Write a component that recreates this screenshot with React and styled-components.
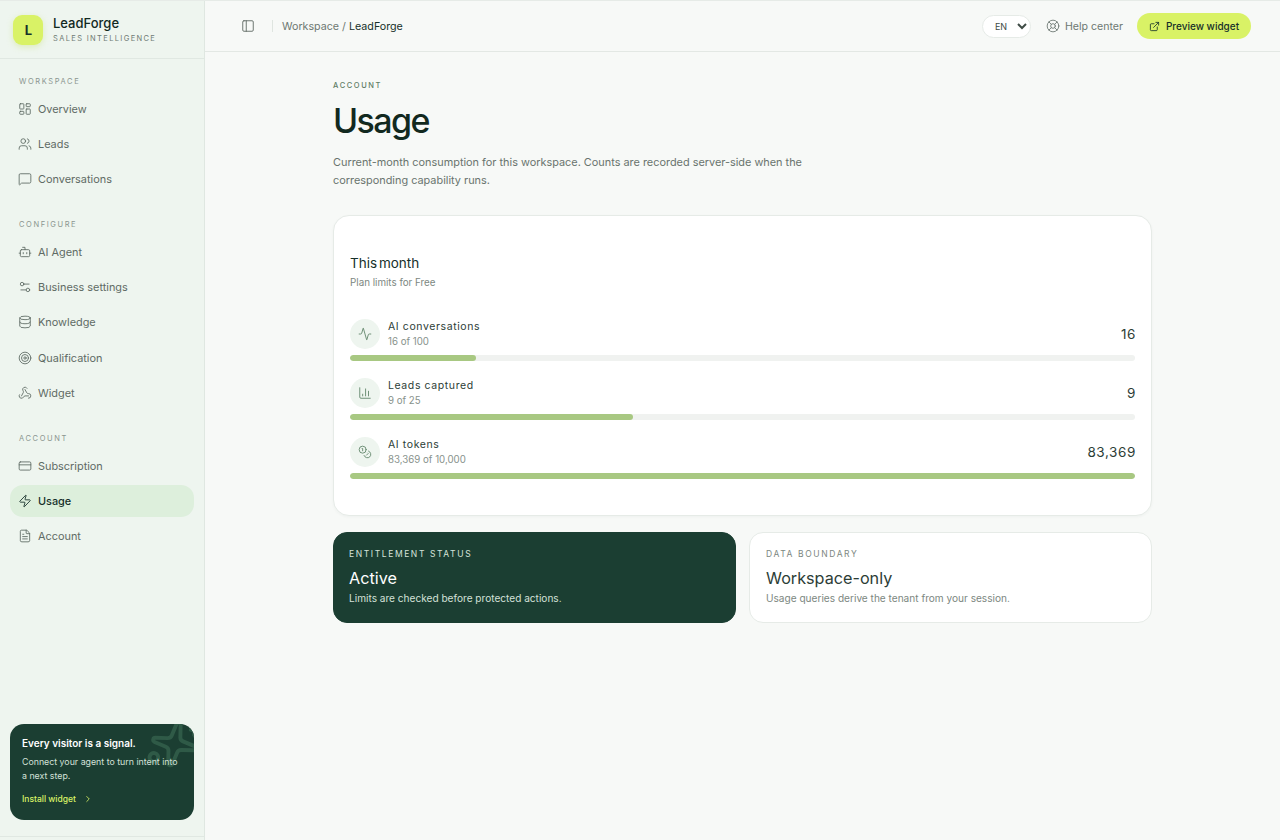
import styled, { createGlobalStyle } from "styled-components";
import {
  Activity,
  Bot,
  ChartColumn,
  ChevronRight,
  Coins,
  CreditCard,
  Database,
  ExternalLink,
  FileText,
  LayoutDashboard,
  LifeBuoy,
  MessageSquare,
  PanelLeft,
  Settings2,
  Sparkles,
  Target,
  Users,
  Webhook,
  Zap,
} from "lucide-react";

const navGroups = [
  {
    label: "Workspace",
    items: [
      { name: "Overview", icon: LayoutDashboard },
      { name: "Leads", icon: Users },
      { name: "Conversations", icon: MessageSquare },
    ],
  },
  {
    label: "Configure",
    items: [
      { name: "AI Agent", icon: Bot },
      { name: "Business settings", icon: Settings2 },
      { name: "Knowledge", icon: Database },
      { name: "Qualification", icon: Target },
      { name: "Widget", icon: Webhook },
    ],
  },
  {
    label: "Account",
    items: [
      { name: "Subscription", icon: CreditCard },
      { name: "Usage", icon: Zap, active: true },
      { name: "Account", icon: FileText },
    ],
  },
];

const meters = [
  { name: "AI conversations", detail: "16 of 100", value: "16", pct: 16, icon: Activity },
  { name: "Leads captured", detail: "9 of 25", value: "9", pct: 36, icon: ChartColumn },
  { name: "AI tokens", detail: "83,369 of 10,000", value: "83,369", pct: 100, icon: Coins },
];

const App = () => {
  return (
    <Shell>
      <GlobalStyle />
      <Sidebar>
        <Brand>
          <BrandMark>L</BrandMark>
          <div>
            <BrandName>LeadForge</BrandName>
            <BrandTag>Sales Intelligence</BrandTag>
          </div>
        </Brand>
        <Nav>
          {navGroups.map((group) => (
            <NavGroup key={group.label}>
              <NavLabel>{group.label}</NavLabel>
              {group.items.map((item) => (
                <NavItem key={item.name} $active={item.active}>
                  <item.icon size={14} strokeWidth={1.5} />
                  {item.name}
                </NavItem>
              ))}
            </NavGroup>
          ))}
        </Nav>
        <Promo>
          <PromoStar>
            <Sparkles size={52} strokeWidth={1.8} />
          </PromoStar>
          <PromoTitle>Every visitor is a signal.</PromoTitle>
          <PromoText>Connect your agent to turn intent into a next step.</PromoText>
          <PromoLink>
            Install widget
            <ChevronRight size={10} strokeWidth={2} />
          </PromoLink>
        </Promo>
        <SidebarFoot />
      </Sidebar>
      <Main>
        <Topbar>
          <TopLeft>
            <PanelLeft size={14} strokeWidth={1.5} color="#5b6660" />
            <Divider />
            <Crumbs>
              Workspace / <strong>LeadForge</strong>
            </Crumbs>
          </TopLeft>
          <TopRight>
            <LangSelect defaultValue="en">
              <option value="en">EN</option>
            </LangSelect>
            <HelpLink>
              <LifeBuoy size={14} strokeWidth={1.5} />
              Help center
            </HelpLink>
            <PreviewBtn>
              <ExternalLink size={11} strokeWidth={1.8} />
              Preview widget
            </PreviewBtn>
          </TopRight>
        </Topbar>
        <Content>
          <Eyebrow>Account</Eyebrow>
          <Title>Usage</Title>
          <Intro>
            Current-month consumption for this workspace. Counts are recorded server-side when the
            corresponding capability runs.
          </Intro>
          <UsageCard>
            <CardTitle>This month</CardTitle>
            <CardSub>Plan limits for Free</CardSub>
            <Meters>
              {meters.map((m) => (
                <Meter key={m.name}>
                  <MeterHead>
                    <MeterIcon>
                      <m.icon size={14} strokeWidth={1.5} />
                    </MeterIcon>
                    <MeterInfo>
                      <MeterName>{m.name}</MeterName>
                      <MeterDetail>{m.detail}</MeterDetail>
                    </MeterInfo>
                    <MeterValue>{m.value}</MeterValue>
                  </MeterHead>
                  <Track>
                    <Fill style={{ width: `${m.pct}%` }} />
                  </Track>
                </Meter>
              ))}
            </Meters>
          </UsageCard>
          <StatusGrid>
            <StatusCard $dark>
              <StatusLabel $dark>Entitlement status</StatusLabel>
              <StatusValue $dark>Active</StatusValue>
              <StatusText $dark>Limits are checked before protected actions.</StatusText>
            </StatusCard>
            <StatusCard>
              <StatusLabel>Data boundary</StatusLabel>
              <StatusValue>Workspace-only</StatusValue>
              <StatusText>Usage queries derive the tenant from your session.</StatusText>
            </StatusCard>
          </StatusGrid>
        </Content>
      </Main>
    </Shell>
  );
};

const GlobalStyle = createGlobalStyle`
  * {
    box-sizing: border-box;
  }
  body {
    margin: 0;
    background: #f7f9f7;
    font-family: Inter, "Noto Sans", sans-serif;
    color: #16302a;
  }
`;

const Shell = styled.div`
  display: flex;
  height: 840px;
  border-top: 1px solid #e6ebe7;
  overflow: hidden;
`;

const Sidebar = styled.aside`
  display: flex;
  flex-direction: column;
  width: 205px;
  flex-shrink: 0;
  background: #eef5ef;
  border-right: 1px solid #dfe7e1;
`;

const Brand = styled.div`
  display: flex;
  align-items: center;
  gap: 10px;
  height: 58px;
  padding: 0 13px;
  border-bottom: 1px solid #e0e8e2;
`;

const BrandMark = styled.div`
  display: flex;
  align-items: center;
  justify-content: center;
  width: 30px;
  height: 30px;
  padding-left: 1px;
  border-radius: 9px;
  background: #d9f266;
  color: #16302a;
  font-size: 13px;
  font-weight: 700;
  box-shadow: 0 2px 6px rgba(190, 220, 90, 0.35);
`;

const BrandName = styled.div`
  font-size: 13px;
  font-weight: 500;
  line-height: 16px;
  color: #12291f;
`;

const BrandTag = styled.div`
  margin-top: 3px;
  font-size: 7.5px;
  line-height: 10px;
  letter-spacing: 1.35px;
  text-transform: uppercase;
  color: #6f7b74;
`;

const Nav = styled.nav`
  flex: 1;
  padding: 16px 10px 0;
`;

const NavGroup = styled.div`
  margin-bottom: 22.7px;
`;

const NavLabel = styled.div`
  height: 13px;
  padding-left: 9px;
  margin-bottom: 5px;
  font-size: 7.5px;
  line-height: 13px;
  letter-spacing: 1.6px;
  text-transform: uppercase;
  color: #8b958f;
`;

const NavItem = styled.a`
  display: flex;
  align-items: center;
  gap: 6px;
  height: 32px;
  margin-bottom: 3.2px;
  padding-left: 8px;
  border-radius: 13px;
  font-size: 10.9px;
  color: ${(props) => (props.$active ? "#16302a" : "#5f6b65")};
  font-weight: ${(props) => (props.$active ? 500 : 400)};
  background: ${(props) => (props.$active ? "#ddefdc" : "none")};
`;

const Promo = styled.div`
  position: relative;
  height: 96px;
  margin: 0 10px 16px;
  padding: 12px 12px;
  border-radius: 14px;
  background: #1b3e32;
  overflow: hidden;
`;

const PromoStar = styled.div`
  position: absolute;
  top: -6px;
  right: -6px;
  color: #2f5a47;
  transform: rotate(12deg);
`;

const PromoTitle = styled.div`
  position: relative;
  font-size: 10px;
  font-weight: 600;
  line-height: 14px;
  color: #ffffff;
`;

const PromoText = styled.div`
  position: relative;
  margin-top: 5px;
  font-size: 8.8px;
  line-height: 14px;
  color: #d3e0d8;
`;

const PromoLink = styled.div`
  position: relative;
  display: flex;
  align-items: center;
  gap: 7px;
  margin-top: 11px;
  font-size: 8.5px;
  font-weight: 500;
  color: #d9f266;
`;

const SidebarFoot = styled.div`
  height: 4px;
  border-top: 1px solid #e0e8e2;
`;

const Main = styled.main`
  flex: 1;
  min-width: 0;
`;

const Topbar = styled.header`
  display: flex;
  align-items: center;
  justify-content: space-between;
  height: 51px;
  padding: 0 29px 0 36px;
  border-bottom: 1px solid #e3e8e4;
`;

const TopLeft = styled.div`
  display: flex;
  align-items: center;
`;

const Divider = styled.span`
  width: 1px;
  height: 12px;
  margin: 0 9px 0 17px;
  background: #dfe5e0;
`;

const Crumbs = styled.div`
  font-size: 10.7px;
  color: #6d7872;
  strong {
    font-weight: 400;
    color: #16302a;
  }
`;

const TopRight = styled.div`
  display: flex;
  align-items: center;
`;

const LangSelect = styled.select`
  width: 49px;
  height: 23px;
  padding: 0 0 0 8px;
  margin-right: 15px;
  border: 1px solid #e6ebe7;
  border-radius: 12px;
  background: #ffffff;
  font-family: inherit;
  font-size: 9px;
  color: #3f4c46;
`;

const HelpLink = styled.a`
  display: flex;
  align-items: center;
  gap: 5px;
  margin-right: 14px;
  font-size: 10.6px;
  color: #6d7872;
`;

const PreviewBtn = styled.button`
  display: flex;
  align-items: center;
  justify-content: center;
  gap: 6px;
  width: 114px;
  height: 26px;
  border: none;
  border-radius: 13px;
  background: #d9f266;
  font-family: inherit;
  font-size: 10px;
  font-weight: 500;
  color: #16302a;
`;

const Content = styled.div`
  width: 819px;
  margin-left: 128px;
  padding-top: 28px;
`;

const Eyebrow = styled.div`
  font-size: 7.5px;
  line-height: 11px;
  font-weight: 500;
  letter-spacing: 1.6px;
  text-transform: uppercase;
  color: #5f7d66;
`;

const Title = styled.h1`
  margin: 8px 0 0;
  font-size: 34px;
  line-height: 44px;
  font-weight: 500;
  letter-spacing: -1.6px;
  color: #12291f;
`;

const Intro = styled.p`
  width: 490px;
  margin: 10px 0 0;
  font-size: 10.9px;
  line-height: 18px;
  color: #69746e;
`;

const UsageCard = styled.section`
  height: 301px;
  margin-top: 26px;
  padding: 38px 16px 0;
  border: 1px solid #e6ebe7;
  border-radius: 16px;
  background: #ffffff;
  box-shadow: 0 1px 3px rgba(20, 50, 40, 0.04);
`;

const CardTitle = styled.h2`
  margin: 0;
  font-size: 13.5px;
  line-height: 18px;
  font-weight: 400;
  word-spacing: -2px;
  color: #16302a;
`;

const CardSub = styled.div`
  margin-top: 4px;
  font-size: 9.8px;
  line-height: 13px;
  color: #7c8781;
`;

const Meters = styled.div`
  display: flex;
  flex-direction: column;
  gap: 17px;
  margin-top: 30px;
`;

const Meter = styled.div``;

const MeterHead = styled.div`
  display: flex;
  align-items: center;
  gap: 8px;
  height: 30px;
`;

const MeterIcon = styled.span`
  display: flex;
  align-items: center;
  justify-content: center;
  width: 30px;
  height: 30px;
  border-radius: 50%;
  background: #eef5ef;
  color: #5f8468;
`;

const MeterInfo = styled.div`
  flex: 1;
`;

const MeterName = styled.div`
  font-size: 10.5px;
  line-height: 14px;
  letter-spacing: 0.6px;
  color: #2c3d36;
`;

const MeterDetail = styled.div`
  margin-top: 1px;
  font-size: 9.7px;
  line-height: 13px;
  color: #88928c;
`;

const MeterValue = styled.div`
  margin-right: -1px;
  font-size: 13.5px;
  font-weight: 400;
  letter-spacing: 0.6px;
  color: #2c3d36;
`;

const Track = styled.div`
  height: 6px;
  margin-top: 6px;
  border-radius: 3px;
  background: #f0f2f0;
  overflow: hidden;
`;

const Fill = styled.div`
  height: 100%;
  border-radius: 3px;
  background: #a8c882;
`;

const StatusGrid = styled.div`
  display: grid;
  grid-template-columns: 1fr 1fr;
  gap: 13px;
  margin-top: 16px;
`;

const StatusCard = styled.div`
  height: 91px;
  padding: 15px ${(props) => (props.$dark ? "15px" : "16px")};
  border-radius: 14px;
  border: 1px solid ${(props) => (props.$dark ? "#1b3e32" : "#e6ebe7")};
  background: ${(props) => (props.$dark ? "#1b3e32" : "#ffffff")};
`;

const StatusLabel = styled.div`
  font-size: 8.5px;
  line-height: 12px;
  letter-spacing: 1.6px;
  text-transform: uppercase;
  color: ${(props) => (props.$dark ? "#d5e3da" : "#7c8781")};
`;

const StatusValue = styled.div`
  margin-top: 8px;
  font-size: 16.2px;
  line-height: 20px;
  font-weight: 400;
  color: ${(props) => (props.$dark ? "#ffffff" : "#2c3d36")};
`;

const StatusText = styled.div`
  margin-top: 4px;
  font-size: 10.1px;
  line-height: 13px;
  color: ${(props) => (props.$dark ? "#d3e0d8" : "#7c8781")};
`;

export default App;
